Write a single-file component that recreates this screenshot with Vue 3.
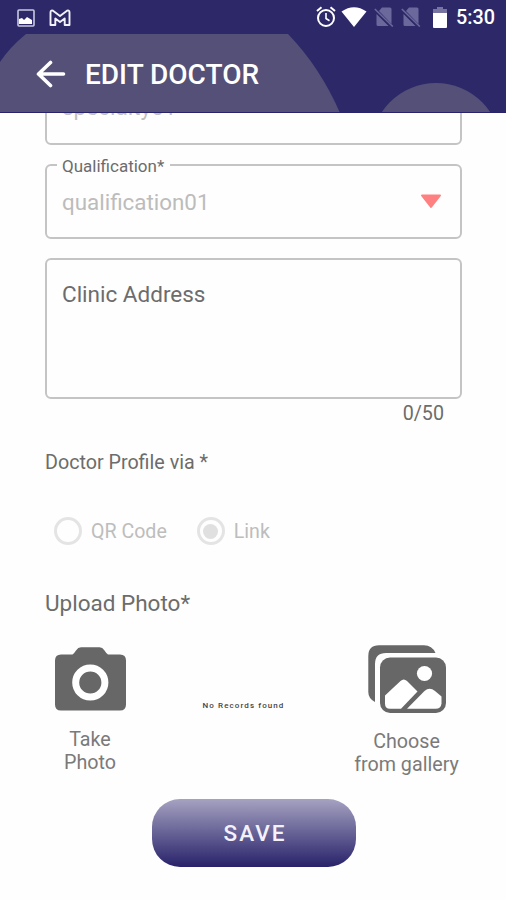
<template>
  <main class="app">
    <header class="header">
      <svg class="decor" viewBox="0 0 506 113">
        <path d="M0 62Q10 47 26 34H288Q320 67 340 113H0Z" />
        <circle cx="436" cy="148" r="65" />
      </svg>

      <div class="status-bar">
        <div class="status-left">
          <svg width="18" height="18" viewBox="0 0 18 18">
            <rect x="1" y="1" width="16" height="16" rx="1" fill="none" stroke="#c9c8e0" stroke-width="1.6" />
            <path d="M2 10l3-1 2 2 3-3 5 3v4H2z" fill="#fff" />
          </svg>
          <svg width="22" height="18" viewBox="0 0 22 18">
            <path d="M1.500 3.500Q1.500.8 4 1.700L11 7l7-5.300q2.500-.9 2.500 1.800V16h-4.800V9.500L11 13 6.300 9.500V16H1.500z" fill="none" stroke="#f3f2fa" stroke-width="1.900" stroke-linejoin="round" />
          </svg>
        </div>
        <div class="status-right">
          <svg class="alarm" width="20" height="22" viewBox="0 0 20 22">
            <g fill="none" stroke="#fff" stroke-width="2">
              <circle cx="10" cy="12" r="8" />
              <path d="M1 5l4.500-3.800M19 5l-4.500-3.800" />
              <path d="M10 7v5.500l3.500 2.200" stroke-width="1.600" />
            </g>
          </svg>
          <svg class="wifi" width="26" height="20" viewBox="0 0 26 20">
            <path d="M.5 4.500Q13-4 25.500 4.500L13 20z" fill="#fff" />
          </svg>
          <svg v-for="n in 2" :key="n" class="sim" width="20" height="20" viewBox="0 0 20 20">
            <path d="M8 .5h8q1.500 0 1.500 1.500v15L5 4zM2.500 7v10.500Q2.500 19 4 19h10.500z" fill="#6b699b" />
            <path d="M.8 2l18 17.500" stroke="#6b699b" stroke-width="1.500" />
          </svg>
          <svg class="battery" width="14" height="21" viewBox="0 0 14 21">
            <path d="M4 0h6v2h4v4H0V2h4z" fill="#77759f" />
            <path d="M0 6h14v14q0 1-1 1H1q-1 0-1-1z" fill="#fff" />
          </svg>
          <span class="time">5:30</span>
        </div>
      </div>

      <div class="title-bar">
        <svg width="30" height="28" viewBox="0 0 30 28">
          <path d="M14.500 2.500L2.500 14l12 11.500M3 14h24.500" fill="none" stroke="#fff" stroke-width="3.600" stroke-linecap="round" stroke-linejoin="round" />
        </svg>
        <h1>{{ title }}</h1>
      </div>
    </header>

    <section class="form">
      <div class="field specialty"><span>specialty01</span></div>

      <fieldset class="field qualification">
        <legend>Qualification*</legend>
        <div class="select">
          <span>qualification01</span>
          <svg width="22" height="15" viewBox="0 0 22 15">
            <path d="M2 1.500h18L11 13z" fill="#ff8080" stroke="#ff8080" stroke-width="2" stroke-linejoin="round" />
          </svg>
        </div>
      </fieldset>

      <div class="field address"><span>Clinic Address</span></div>
      <p class="counter">0/50</p>

      <p class="label profile">Doctor Profile via *</p>
      <div class="radios">
        <div v-for="option in options" :key="option" class="radio">
          <i :class="{ checked: option === selected }"></i>
          <span>{{ option }}</span>
        </div>
      </div>

      <p class="label upload">Upload Photo*</p>
      <div class="photos">
        <div class="photo take">
          <svg width="71" height="64" viewBox="0 0 71 64">
            <path d="M6 7.500H17.500Q19.500 6 21 3.500 23 .3 26 .3H44.500Q47.500.3 49.500 3.500 51 6 53 7.500H65Q71 7.500 71 13.500V57.500Q71 63.500 65 63.500H6Q0 63.500 0 57.500V13.500Q0 7.500 6 7.500Z" fill="#676767" />
            <circle cx="35.300" cy="35.500" r="14.600" fill="none" stroke="#fff" stroke-width="7" />
          </svg>
          <span>Take<br>Photo</span>
        </div>
        <p class="empty">No Records found</p>
        <div class="photo choose">
          <svg width="78" height="69" viewBox="0 0 78 69">
            <path d="M7 57Q.3 53.500.3 47V11Q.3.3 11 .3H56Q64 .3 67.500 8H18Q7 8 7 19Z" fill="#676767" />
            <rect x="12" y="12.500" width="66" height="55.500" rx="10" fill="#676767" />
            <circle cx="56.500" cy="28.500" r="7.600" fill="#fff" />
            <path d="M17 50.500L32.500 36Q35.800 33 39 36L49.500 46.500 33 63.800H22Q17 63.800 17 58.500Z" fill="#fff" />
            <path d="M39 63.800L56.500 46Q61.500 41.500 67 46L73.500 51.500V58.500Q73 63.800 67.500 63.800Z" fill="#fff" />
          </svg>
          <span>Choose<br>from gallery</span>
        </div>
      </div>

      <button class="save">SAVE</button>
    </section>
  </main>
</template>

<script setup>
import { ref } from 'vue';

const title = 'EDIT DOCTOR';
const options = ['QR Code', 'Link'];
const selected = ref('Link');
</script>

<style>
body {
  margin: 0;
  background: #fefefe;
}
</style>

<style scoped>
.app {
  width: 506px;
  height: 900px;
  overflow: hidden;
  background: #fefefe;
  font-family: Roboto, sans-serif;
  color: #6c6c6c;
}

p,
h1 {
  margin: 0;
}

svg {
  display: block;
  flex: none;
}

span,
p {
  white-space: nowrap;
}

.header {
  position: relative;
  height: 113px;
  background: #2d2969;
  color: #fff;
}

.decor {
  position: absolute;
  left: 0;
  top: 0;
  width: 506px;
  height: 113px;
  fill: #545077;
}

.header::after {
  content: "";
  position: absolute;
  left: 0;
  bottom: 0;
  width: 100%;
  height: 1px;
  background: #28236a;
}

.status-bar {
  position: relative;
  display: flex;
  justify-content: space-between;
  height: 34px;
  padding: 0 11px 0 17px;
  box-sizing: border-box;
}

.status-left,
.status-right {
  display: flex;
  align-items: center;
}

.status-left {
  gap: 14px;
  padding-top: 1px;
}

.wifi {
  margin-left: 5px;
}

.sim {
  margin-left: 7px;
}

.battery {
  margin-left: 12px;
}

.time {
  margin-left: 9px;
  width: 39px;
  padding-top: 2px;
  font-size: 19.8px;
  font-weight: 500;
  line-height: 34px;
}

.title-bar {
  position: relative;
  display: flex;
  align-items: center;
  gap: 19px;
  height: 79px;
  padding-left: 36px;
}

h1 {
  font-size: 28px;
  font-weight: 500;
  line-height: 40px;
  padding-top: 2px;
}

.form {
  display: flow-root;
  height: 787px;
  padding: 0 44px 0 45px;
  overflow: hidden;
}

.field {
  box-sizing: border-box;
  width: 417px;
  margin: 0;
  border: 2px solid #c4c4c4;
  border-radius: 6px;
}

.specialty {
  display: flex;
  align-items: flex-end;
  height: 75px;
  margin-top: -43px;
  padding: 0 0 22px 15px;
  font-size: 22.5px;
  line-height: 27px;
  color: #c0c0c0;
}

.qualification {
  height: 83px;
  margin-top: 11px;
  padding: 0 18px 0 10px;
}

legend {
  height: 18px;
  padding: 0 6px 0 5px;
  font-size: 17px;
  line-height: 20px;
}

.select {
  display: flex;
  align-items: center;
  justify-content: space-between;
  height: 54px;
  padding-left: 5px;
  font-size: 22.4px;
  color: #bcbcbc;
}

.select span {
  padding-top: 2px;
}

.address {
  height: 141px;
  margin-top: 19px;
  padding: 20px 15px;
  font-size: 22.5px;
  line-height: 28px;
}

.counter {
  padding: 1px 18px 0 0;
  font-size: 19.7px;
  line-height: 28px;
  text-align: right;
}

.label {
  font-size: 19.7px;
  line-height: 28px;
}

.profile {
  margin-top: 21px;
}

.radios {
  display: flex;
  gap: 30px;
  height: 28px;
  margin-top: 40px;
  padding-left: 9px;
}

.radio {
  display: flex;
  align-items: center;
  gap: 9px;
  font-size: 19.6px;
  color: #bdbdbd;
}

.radio i {
  display: flex;
  align-items: center;
  justify-content: center;
  box-sizing: border-box;
  width: 28px;
  height: 28px;
  border: 3px solid #e4e4e4;
  border-radius: 50%;
}

.radio i.checked::after {
  content: "";
  width: 15px;
  height: 15px;
  border-radius: 50%;
  background: #e0e0e0;
}

.upload {
  margin-top: 44px;
  font-size: 22.5px;
}

.photos {
  display: flex;
  height: 182px;
  box-sizing: border-box;
  padding-top: 28px;
}

.photo {
  display: flex;
  flex-direction: column;
  align-items: center;
  font-size: 19.7px;
  line-height: 23px;
  text-align: center;
  color: #7a7a7a;
}

.take {
  width: 90px;
  padding-top: 2px;
}

.take span {
  margin-top: 17px;
}

.empty {
  width: 217px;
  padding-top: 54px;
  font-size: 8px;
  font-weight: 500;
  line-height: 14px;
  letter-spacing: 1.1px;
  text-align: center;
  color: #444;
}

.choose {
  width: 109px;
}

.choose span {
  margin-top: 16px;
}

.save {
  display: block;
  width: 204px;
  height: 68px;
  margin-left: 107px;
  padding: 0 0 0 2px;
  border: 0;
  border-radius: 28px;
  background: linear-gradient(#a5a2c1, #28226a);
  color: #f3f2fb;
  font: 500 22.5px Roboto, sans-serif;
  letter-spacing: 2px;
}
</style>
